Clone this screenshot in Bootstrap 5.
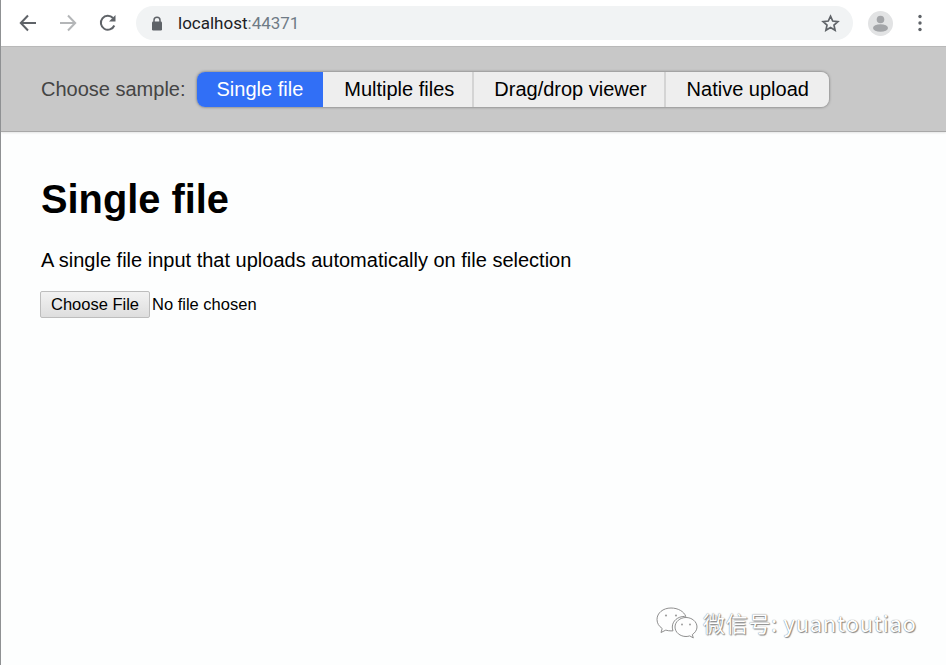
<!DOCTYPE html>
<html lang="en">
<head>
<meta charset="utf-8">
<title>Single file</title>
<link href="https://cdn.jsdelivr.net/npm/bootstrap@5.3.0/dist/css/bootstrap.min.css" rel="stylesheet">
<style>
html,body{height:100%;}
body{font-family:"Liberation Sans",Arial,sans-serif;background:#fdfefe;color:#000;overflow:hidden;position:relative;border-left:1px solid #8f9193;}
.chrome-bar{height:46px;background:#fff;padding-left:17px;}
.tool-ico{display:block;flex:none;}
.omni{margin-left:18px;margin-right:15px;height:34px;width:717px;background:#f1f3f4;border-radius:17px;padding-left:15px;padding-right:13px;}
.omni-url{font-family:Roboto,"Liberation Sans",sans-serif;font-size:17px;color:#202124;margin-left:15px;line-height:1;padding-top:1px;}
.omni-port{color:#6f7b86;}
.sample-bar{height:86px;background:#c8c8c8;padding-left:40px;border-top:1px solid #b9b9b9;border-bottom:1px solid #a8a8a8;box-shadow:0 1px 2px rgba(0,0,0,.1);}
.sample-label{font-size:20px;color:#444;margin-right:11px;}
.sample-group{height:35px;border-radius:8px;box-shadow:0 0 3px rgba(0,0,0,.5);overflow:hidden;}
.sample-btn{height:35px;border:0;border-left:2px solid #d4d4d4;background:#eee;color:#000;font-size:20px;padding:0 19px;line-height:35px;}
.sample-btn.is-on{background:#316ff6;color:#fff;border-left:0;padding:0 20px;}
.sample-btn.is-next{border-left:0;padding-left:21px;padding-right:18px;}
.sample-btn.is-drag{padding-left:20px;padding-right:17px;}
.sample-btn.is-last{padding-left:21px;padding-right:20px;}
.page-body{padding:0 40px;}
.page-title{font-size:39.800px;font-weight:700;line-height:46px;margin:44px 0 0;}
.page-desc{font-size:20px;line-height:24px;margin:26px 0 0;}
.file-row{margin-top:19px;margin-left:-1px;font-size:16.500px;}
.file-btn{width:110px;height:27px;padding:0 0 1px;border:1px solid #bdbdbd;border-radius:2px;background:linear-gradient(#f2f2f2,#dedede);font-size:16.500px;color:#000;line-height:24px;}
.file-none{margin-left:2px;}
.mark-wrap{position:absolute;left:654px;top:604px;opacity:.95;}
.mark-text{font-family:"Noto Sans CJK SC","Liberation Sans",sans-serif;font-size:22px;color:#fff;letter-spacing:.7px;line-height:36px;margin-left:4px;text-shadow:0 0 1px #555,1px 1px 1px #888;}
</style>
</head>
<body>
<div class="chrome-bar d-flex align-items-center">
  <svg class="tool-ico" width="20" height="20" viewBox="0 0 20 20" fill="none" stroke="#5f6368" stroke-width="2"><path d="M18 10H3M10 2.500 2.800 10 10 17.500"/></svg>
  <svg class="tool-ico" style="margin-left:20px" width="20" height="20" viewBox="0 0 20 20" fill="none" stroke="#b4b6b8" stroke-width="2"><path d="M2 10h15M10 2.500 17.200 10 10 17.500"/></svg>
  <svg class="tool-ico" style="margin-left:20px" width="20" height="20" viewBox="0 0 20 20" fill="none" stroke="#5f6368" stroke-width="2"><path d="M16.300 12.500A7 7 0 1 1 15 5"/><path d="M17.500 2v6.500H11z" fill="#5f6368" stroke="none"/></svg>
  <div class="omni d-flex align-items-center">
    <svg width="12" height="15" viewBox="0 0 12 15"><path d="M3 6V4.200a3 3 0 0 1 6 0V6" fill="none" stroke="#5f6368" stroke-width="1.500"/><rect x="1" y="5.500" width="10" height="9" rx="1.200" fill="#5f6368"/></svg>
    <span class="omni-url">localhost<span class="omni-port">:44371</span></span>
    <svg class="ms-auto" width="19" height="19" viewBox="0 0 19 19" fill="none" stroke="#5f6368" stroke-width="1.700"><path d="M9.500 2.200l2.200 4.800 5.200.6-3.900 3.500 1.100 5.200-4.600-2.700-4.600 2.700 1.100-5.200L2.100 7.600l5.200-.6z"/></svg>
  </div>
  <svg class="tool-ico" width="25" height="25" viewBox="0 0 25 25"><circle cx="12.500" cy="12.500" r="12.500" fill="#e2e3e4"/><circle cx="12.500" cy="8.500" r="3.800" fill="#a3a5a8"/><ellipse cx="12.500" cy="17" rx="7.500" ry="3.800" fill="#a3a5a8"/></svg>
  <svg class="tool-ico" style="margin-left:24px" width="6" height="18" viewBox="0 0 6 18" fill="#5f6368"><circle cx="3" cy="2.500" r="1.700"/><circle cx="3" cy="9" r="1.700"/><circle cx="3" cy="15.500" r="1.700"/></svg>
</div>
<div class="sample-bar d-flex align-items-center">
  <span class="sample-label">Choose sample:</span>
  <div class="sample-group d-flex">
    <button class="sample-btn is-on" type="button">Single file</button>
    <button class="sample-btn is-next" type="button">Multiple files</button>
    <button class="sample-btn is-drag" type="button">Drag/drop viewer</button>
    <button class="sample-btn is-last" type="button">Native upload</button>
  </div>
</div>
<div class="page-body">
  <h1 class="page-title">Single file</h1>
  <p class="page-desc">A single file input that uploads automatically on file selection</p>
  <div class="file-row d-flex align-items-center">
    <button class="file-btn" type="button">Choose File</button>
    <span class="file-none">No file chosen</span>
  </div>
</div>
<div class="mark-wrap d-flex align-items-center">
  <svg width="44" height="36" viewBox="0 0 44 36" fill="#fff" stroke="#8a8a8a" stroke-width="1"><path d="M16 4C8 4 2 9 2 15.500c0 3.800 2 6.800 5.200 9L6 28.500l4.800-2.400c1.700.5 3.300.8 5.200.8.700 0 1.300 0 2-.1-.5-1.300-.7-2.500-.7-3.800 0-6 5.500-10.600 12.300-10.600h1.200C29 7.500 23 4 16 4z"/><path d="M42 23c0-5.400-5.200-9.500-11-9.500S20 17.600 20 23s5.200 9.500 11 9.500c1.300 0 2.500-.2 3.700-.6l3.600 2-1-3.300C40 28.800 42 26 42 23z"/><g fill="#9a9a9a" stroke="none"><circle cx="11" cy="11.500" r="1.100"/><circle cx="21" cy="11.500" r="1.100"/><circle cx="27" cy="20.500" r="1"/><circle cx="35" cy="20.500" r="1"/></g></svg>
  <span class="mark-text">微信号: yuantoutiao</span>
</div>
</body>
</html>
